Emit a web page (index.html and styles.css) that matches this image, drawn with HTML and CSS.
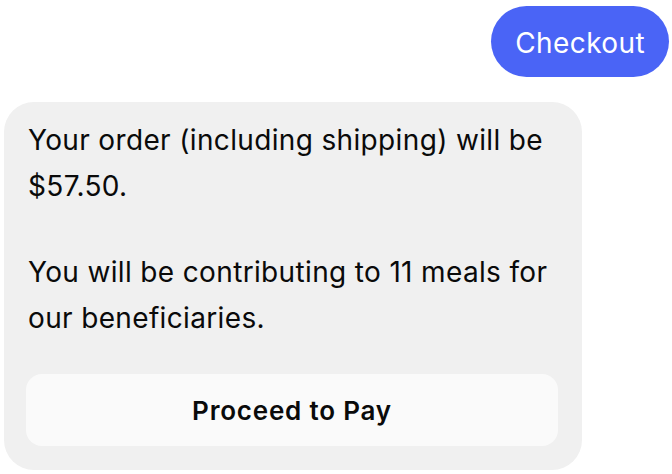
FILE: index.html
```html
<!DOCTYPE html>
<html>
<head>
<meta charset="utf-8">
<link rel="stylesheet" href="styles.css">
</head>
<body>
<div class="chat">
  <div class="row row-out">
    <div class="bubble-out">Checkout</div>
  </div>
  <div class="row row-in">
    <div class="bubble-in">
      <p class="msg">Your order (including shipping) will be $57.50.</p>
      <p class="msg">You will be contributing to 11 meals for our beneficiaries.</p>
      <button class="pay-btn">Proceed to Pay</button>
    </div>
  </div>
</div>
</body>
</html>
```

FILE: styles.css
```css
* { box-sizing: border-box; }
html, body { margin: 0; padding: 0; background: #ffffff; }
body {
  font-family: Inter, "Noto Sans", sans-serif;
  width: 672px;
  height: 474px;
  overflow: hidden;
}
.chat {
  display: flex;
  flex-direction: column;
  gap: 25px;
  padding: 6px 3px 0 4px;
}
.row { display: flex; }
.row-out { justify-content: flex-end; }
.row-in { justify-content: flex-start; }
.bubble-out {
  background: #4a64f6;
  color: #ffffff;
  height: 71px;
  padding: 2px 24px 0 24px;
  border-radius: 36px;
  display: flex;
  align-items: center;
  font-size: 28px;
  letter-spacing: 0.4px;
}
.bubble-in {
  width: 578px;
  height: 368px;
  background: #f0f0f0;
  border-radius: 30px;
  padding: 15px 24px 24px 24px;
  display: flex;
  flex-direction: column;
}
.msg {
  margin: 0;
  font-size: 28px;
  line-height: 46px;
  color: #0a0a0a;
  letter-spacing: 0.35px;
}
.msg + .msg { margin-top: 40px; }
.pay-btn {
  margin: auto 0 0 -2px;
  height: 72px;
  border: none;
  background: #fafafa;
  border-radius: 16px;
  font-family: Inter, sans-serif;
  font-weight: 600;
  font-size: 26px;
  letter-spacing: 0.8px;
  color: #0a0a0a;
}
```
